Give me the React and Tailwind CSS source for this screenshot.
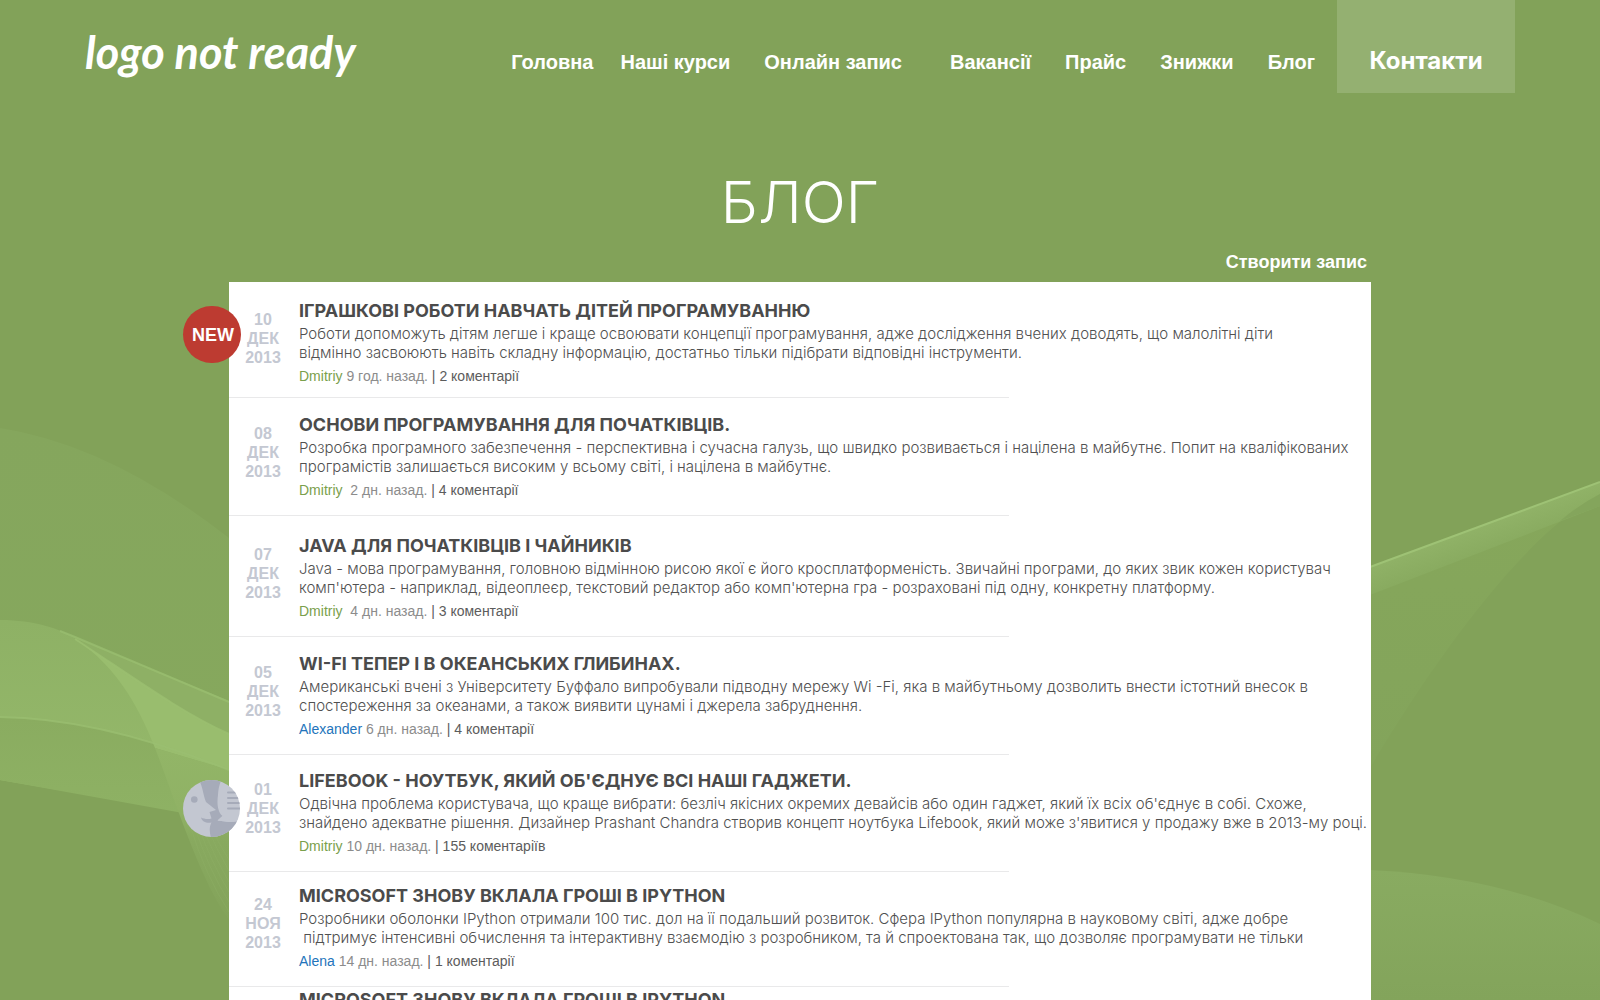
import React from "react";

const NAV = [
  { label: "Головна", gap: "mr-[27px]" },
  { label: "Наші курси", gap: "mr-[34px]" },
  { label: "Онлайн запис", gap: "mr-12" },
  { label: "Вакансії", gap: "mr-[34px]" },
  { label: "Прайс", gap: "mr-[34px]" },
  { label: "Знижки", gap: "mr-[34px]" },
  { label: "Блог", gap: "mr-[22px]" },
];

const POSTS = [
  {
    day: "10", month: "ДЕК", year: "2013", badge: "new", pad: "pt-4 pb-[9px]",
    title: "ІГРАШКОВІ РОБОТИ НАВЧАТЬ ДІТЕЙ ПРОГРАМУВАННЮ",
    lines: [
      "Роботи допоможуть дітям легше і краще освоювати концепції програмування, адже дослідження вчених доводять, що малолітні діти",
      "відмінно засвоюють навіть складну інформацію, достатньо тільки підібрати відповідні інструменти.",
    ],
    author: "Dmitriy", color: "text-[#7aa04c]", ago: " 9 год. назад.", comments: "2 коментарії",
  },
  {
    day: "08", month: "ДЕК", year: "2013", pad: "pt-[14px] pb-[13px]",
    title: "ОСНОВИ ПРОГРАМУВАННЯ ДЛЯ ПОЧАТКІВЦІВ.",
    lines: [
      "Розробка програмного забезпечення - перспективна і сучасна галузь, що швидко розвивається і націлена в майбутнє. Попит на кваліфікованих",
      "програмістів залишається високим у всьому світі, і націлена в майбутнє.",
    ],
    author: "Dmitriy", color: "text-[#7aa04c]", ago: "  2 дн. назад.", comments: "4 коментарії",
  },
  {
    day: "07", month: "ДЕК", year: "2013", pad: "pt-[17px] pb-[13px]",
    title: "JAVA ДЛЯ ПОЧАТКІВЦІВ І ЧАЙНИКІВ",
    lines: [
      "Java - мова програмування, головною відмінною рисою якої є його кросплатформеність. Звичайні програми, до яких звик кожен користувач",
      "комп'ютера - наприклад, відеоплеєр, текстовий редактор або комп'ютерна гра - розраховані під одну, конкретну платформу.",
    ],
    author: "Dmitriy", color: "text-[#7aa04c]", ago: "  4 дн. назад.", comments: "3 коментарії",
  },
  {
    day: "05", month: "ДЕК", year: "2013", pad: "pt-[14px] pb-[13px]",
    title: "WI-FI ТЕПЕР І В ОКЕАНСЬКИХ ГЛИБИНАХ.",
    lines: [
      "Американські вчені з Університету Буффало випробували підводну мережу Wi -Fi, яка в майбутньому дозволить внести істотний внесок в",
      "спостереження за океанами, а також виявити цунамі і джерела забруднення.",
    ],
    author: "Alexander", color: "text-[#2374bb]", ago: " 6 дн. назад.", comments: "4 коментарії",
  },
  {
    day: "01", month: "ДЕК", year: "2013", badge: "face", pad: "pt-[13px] pb-[13px]",
    title: "LIFEBOOK - НОУТБУК, ЯКИЙ ОБ'ЄДНУЄ ВСІ НАШІ ГАДЖЕТИ.",
    lines: [
      "Одвічна проблема користувача, що краще вибрати: безліч якісних окремих девайсів або один гаджет, який їх всіх об'єднує в собі. Схоже,",
      "знайдено адекватне рішення. Дизайнер Prashant Chandra створив концепт ноутбука Lifebook, який може з'явитися у продажу вже в 2013-му році.",
    ],
    author: "Dmitriy", color: "text-[#7aa04c]", ago: " 10 дн. назад.", comments: "155 коментаріїв",
  },
  {
    day: "24", month: "НОЯ", year: "2013", pad: "pt-[11px] pb-[13px]",
    title: "MICROSOFT ЗНОВУ ВКЛАЛА ГРОШІ В IPYTHON",
    lines: [
      "Розробники оболонки IPython отримали 100 тис. дол на її подальший розвиток. Сфера IPython популярна в науковому світі, адже добре",
      " підтримує інтенсивні обчислення та інтерактивну взаємодію з розробником, та й спроектована так, що дозволяє програмувати не тільки",
    ],
    author: "Alena", color: "text-[#2374bb]", ago: " 14 дн. назад.", comments: "1 коментарії",
  },
];

function Waves() {
  return (
    <svg
      className="absolute inset-0 h-full w-full"
      viewBox="0 0 1600 1000"
      preserveAspectRatio="none"
      aria-hidden="true"
    >
      <defs>
        <linearGradient id="band" x1="0" y1="0" x2="0" y2="1">
          <stop offset="0" stopColor="#8eb165" />
          <stop offset="1" stopColor="#97bb6c" />
        </linearGradient>
        <linearGradient id="under" x1="0" y1="0" x2="0" y2="1">
          <stop offset="0" stopColor="#8aac60" />
          <stop offset="1" stopColor="#90b466" />
        </linearGradient>
        <linearGradient id="tail" x1="0" y1="0" x2="0" y2="1">
          <stop offset="0" stopColor="#92b567" />
          <stop offset="0.35" stopColor="#90b265" />
          <stop offset="0.55" stopColor="#88a95f" />
          <stop offset="1" stopColor="#83a35a" />
        </linearGradient>
        <linearGradient id="beam" gradientUnits="userSpaceOnUse" x1="1480" y1="526" x2="1490" y2="554">
          <stop offset="0" stopColor="#90b267" />
          <stop offset="1" stopColor="#88aa5f" />
        </linearGradient>
        <linearGradient id="veil" x1="0" y1="0" x2="0" y2="1">
          <stop offset="0" stopColor="#86a75b" />
          <stop offset="1" stopColor="#83a45b" />
        </linearGradient>
        <linearGradient id="hill" x1="0" y1="0" x2="0" y2="1">
          <stop offset="0" stopColor="#89ab61" />
          <stop offset="1" stopColor="#83a45b" />
        </linearGradient>
        <linearGradient id="haze" x1="0" y1="0" x2="0" y2="1">
          <stop offset="0" stopColor="#85a65d" />
          <stop offset="1" stopColor="#86a85d" />
        </linearGradient>
      </defs>
      <path d="M0 428Q110 445 229 538L400 660V740L0 700Z" fill="url(#haze)" />
      <path d="M0 620C35 620 58 629 75 637L229 701L400 765V850L229 819L0 780Z" fill="url(#band)" />
      <path d="M0 717C80 718 160 742 229 770L400 840V860L183 813L0 780Z" fill="url(#under)" />
      <path d="M75 639C120 660 170 706 229 734L400 800V840L229 770L155 748C142 715 120 668 75 639Z" fill="#99bd6e" />
      <path d="M155 748L229 770V920C200 880 175 800 155 748Z" fill="url(#tail)" />
      <path d="M75 639L229 702V734C180 712 130 675 75 639Z" fill="#8eb065" />
      <path d="M60 631L75 637L229 702" fill="none" stroke="#99bd6f" strokeWidth="2" opacity="0.8" />
      <path d="M75 639C130 675 180 712 229 734" fill="none" stroke="#9bbf70" strokeWidth="2" opacity="0.8" />
      <path d="M0 717C80 718 160 742 229 770" fill="none" stroke="#9abe70" strokeWidth="2" opacity="0.8" />
      <g fill="none" stroke="#92b369" strokeWidth="0.6" opacity="0.5">
        <path d="M190 825Q205 875 229 912" />
        <path d="M194 825Q208 868 229 902" />
        <path d="M198 825Q211 862 229 892" />
        <path d="M202 825Q214 856 229 882" />
        <path d="M206 825Q217 850 229 871" />
        <path d="M210 825Q219 844 229 860" />
      </g>
      <path d="M1370 595L1600 494C1530 530 1440 650 1370 768Z" fill="url(#veil)" />
      <path d="M1370 567L1600 482V506L1370 595Z" fill="url(#beam)" />
      <path d="M1600 494Q1580 504 1560 521L1600 506Z" fill="#84a55c" />
      <path d="M1370 567L1600 482" fill="none" stroke="#9ec275" strokeWidth="2" />
      <path d="M1370 870Q1500 876 1600 924V1000H1370Z" fill="url(#hill)" />
    </svg>
  );
}

function FaceBadge() {
  return (
    <svg className="absolute -left-[46px] top-[25px] h-[57px] w-[57px]" viewBox="0 0 57 57" role="img" aria-label="Аватар">
      <clipPath id="disc">
        <circle cx="28.5" cy="28.5" r="28.5" />
      </clipPath>
      <g clipPath="url(#disc)">
        <rect width="57" height="57" fill="#c3c7d1" />
        <path
          d="M16 0C20 7 20 15 23 22L33 30L26.5 32L28.5 38.5C25 39.5 21 39 18 37.5C19 42 24 43.5 28.5 42.5C26 47 26.5 52 28 58H60V41L46 42L34.5 40.5L39.5 36C34 31 34 22 35 15C35.5 8 36.5 4 38.5 0Z"
          fill="#a6abb9"
        />
        <path d="M34.5 40.5L39.5 36C42 39 48 41 55 41.5L46 42Z" fill="#c3c7d1" />
        <path d="M45 12.5H58M45 18H58M45 23H58M45 28.5H58" stroke="#a6abb9" strokeWidth="2" strokeLinecap="round" />
        <circle cx="11.3" cy="19.5" r="3.3" fill="#a6abb9" />
      </g>
    </svg>
  );
}

function Post({ post }) {
  return (
    <article className="relative">
      {post.badge === "new" && (
        <span className="absolute -left-[46px] top-6 flex h-[57px] w-[58px] items-center justify-center rounded-full bg-[#bd3b31] pl-0.5 text-lg font-bold text-white">
          NEW
        </span>
      )}
      {post.badge === "face" && <FaceBadge />}
      <div className={"flex " + post.pad}>
        <time className="mt-3 flex w-[70px] shrink-0 flex-col pr-0.5 text-center text-base leading-[19px] font-bold text-[#c4c8d2]">
          <span>{post.day}</span>
          <span>{post.month}</span>
          <span>{post.year}</span>
        </time>
        <div className="min-w-0 whitespace-pre">
          <h2 className="font-[Inter,sans-serif] text-lg leading-[26px] font-bold text-[#4b4b4b]">{post.title}</h2>
          <p className="font-[Inter,sans-serif] text-[15px] leading-[19px] font-light text-[#505050]">
            {post.lines.map((line) => (
              <span key={line} className="block">{line}</span>
            ))}
          </p>
          <p className="mt-0.5 text-sm leading-6 text-[#8c8c8c]">
            <a href="#" className={post.color}>{post.author}</a>
            {post.ago + " "}
            <a href="#" className="text-[#5c5c5c]">{"| " + post.comments}</a>
          </p>
        </div>
      </div>
      <hr className="w-[780px] max-w-full border-t border-[#e9e9ea]" />
    </article>
  );
}

export default function App() {
  return (
    <div className="relative h-screen overflow-hidden bg-[#82a259] font-['Liberation_Sans',Arial,sans-serif]">
      <Waves />
      <div className="relative h-full overflow-x-hidden overflow-y-auto [scrollbar-width:none]">
        <header className="flex items-start justify-between pr-[85px] pl-[85px] text-white">
          <a href="#" className="pt-[23px] font-[Lato,cursive] text-[45px] leading-[58px] font-bold whitespace-nowrap italic">
            logo not ready
          </a>
          <nav className="flex h-[93px] items-baseline text-xl font-bold whitespace-nowrap">
            {NAV.map((item) => (
              <a key={item.label} href="#" className={item.gap}>{item.label}</a>
            ))}
            <a href="#" className="h-[93px] w-[178px] bg-[#94b071] pt-[46px] text-center font-[Inter,sans-serif] text-2xl leading-[30px]">
              Контакти
            </a>
          </nav>
        </header>
        <main className="mx-auto w-full max-w-[1142px]">
          <h1 className="pt-[73px] text-center font-[Inter,sans-serif] text-[58px] leading-[72px] font-light text-white">БЛОГ</h1>
          <div className="mt-3 flex justify-end pr-1">
            <a href="#" className="pb-2 text-lg leading-6 font-bold text-white">Створити запис</a>
          </div>
          <section className="bg-white">
            {POSTS.map((post) => (
              <Post key={post.title} post={post} />
            ))}
            <h2 className="pl-[70px] font-[Inter,sans-serif] text-lg leading-[26px] font-bold text-[#4b4b4b]">
              MICROSOFT ЗНОВУ ВКЛАЛА ГРОШІ В IPYTHON
            </h2>
          </section>
        </main>
      </div>
    </div>
  );
}
